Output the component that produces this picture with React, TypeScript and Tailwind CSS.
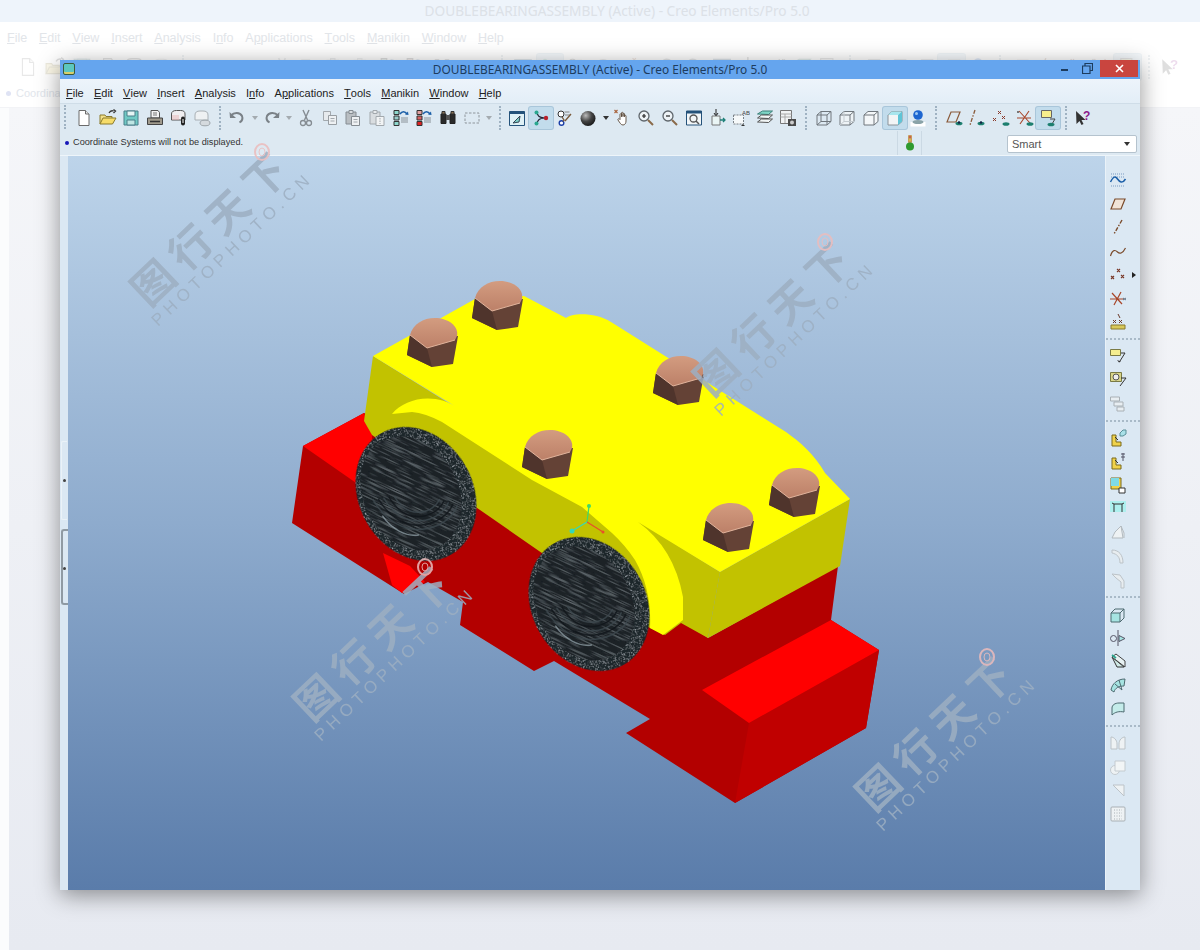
import type { ReactNode } from "react";

const UI = { fontFamily: '"Liberation Sans", Arial, sans-serif' };

const I: Record<string, ReactNode> = {
  doc: (<><path d="M4 1.5h6.5L14 5v11.5H4z" fill="#fff" stroke="#6b6b6b" /><path d="M10.5 1.5V5H14" fill="#e6e6e6" stroke="#6b6b6b" /></>),
  open: (<><path d="M1 15V6h5l1 1.5h6V10" fill="#f2e08a" stroke="#8a7a2c" /><path d="M1 15l3-6h13l-3.5 6z" fill="#f6dc6a" stroke="#8a7a2c" /><path d="M10 4c1-2 3-2.5 4.500-2M14.500 0.500l2 1.500-2 2" fill="none" stroke="#333" strokeWidth="1.300" /></>),
  save: (<><path d="M2 2h14v14H2z" fill="#6fc9c4" stroke="#4a7f8a" /><path d="M5 2h8v5H5z" fill="#e6f5f5" stroke="#4a7f8a" /><path d="M5 11h8v5H5z" fill="#bfe6e4" stroke="#4a7f8a" /></>),
  print: (<><path d="M5 1.500h7l1.500 2V9H5z" fill="#f2f2f2" stroke="#555" /><path d="M1.500 9h15v6.500h-15z" fill="#a09a8c" stroke="#444" /><path d="M4 12.500h10" stroke="#333" strokeWidth="1.500" /><path d="M7 4h4M7 6h4" stroke="#777" /></>),
  preview: (<><path d="M1.500 5c0-2.500 2-3.500 5-3.500h4c3 0 4.500 1 4.500 3.500v6h-13.500z" fill="#f0eef0" stroke="#555" /><path d="M2 6h7v5H2z" fill="#e8b8b8" opacity=".5" /><rect x="11" y="7.500" width="4" height="9" rx="2" fill="#222" /><path d="M13 10v4" stroke="#fff" /></>),
  previewOff: (<><path d="M2 6c0-3 2-4 5-4h3c3 0 5 1 5 4v5H2z" fill="#eef1f3" stroke="#a9b0b5" /><ellipse cx="12" cy="14" rx="5" ry="2.800" fill="#d5dade" stroke="#9ea5aa" /></>),
  undo: (<><path d="M3 6.500c3-3.500 9-3.500 11 .5 1 2.500 0 5-2.500 6.500" fill="none" stroke="#7a8187" strokeWidth="2" /><path d="M1.500 3l.5 6h6z" fill="#7a8187" /></>),
  redo: (<><path d="M15 6.500c-3-3.500-9-3.500-11 .5-1 2.500 0 5 2.500 6.500" fill="none" stroke="#7a8187" strokeWidth="2" /><path d="M16.500 3l-.5 6h-6z" fill="#7a8187" /></>),
  cut: (<><path d="M6 1l4.500 10M12 1L7.500 11" stroke="#858c92" strokeWidth="1.400" /><circle cx="6" cy="14" r="2.500" fill="none" stroke="#858c92" strokeWidth="1.300" /><circle cx="12" cy="14" r="2.500" fill="none" stroke="#858c92" strokeWidth="1.300" /></>),
  copy: (<><path d="M2.500 2.500h7v9h-7z" fill="#e6eaed" stroke="#a2a8ad" /><path d="M7.500 6.500h8v9h-8z" fill="#eef1f3" stroke="#989ea3" /><path d="M9.500 9.500h4M9.500 12h4" stroke="#a2a8ad" /></>),
  paste: (<><path d="M2 3h10v12H2z" fill="#b9bec2" stroke="#858c92" /><path d="M5 1.500h4v3H5z" fill="#d8dcdf" stroke="#858c92" /><path d="M7.500 7.500h8v9h-8z" fill="#eef1f3" stroke="#858c92" /><path d="M9.500 10.500h4M9.500 13h4" stroke="#a2a8ad" /></>),
  pasteS: (<><path d="M2 3h10v12H2z" fill="#d9dde0" stroke="#a2a8ad" /><path d="M5 1.500h4v3H5z" fill="#e8ebed" stroke="#a2a8ad" /><path d="M8 7.500h8v9H8z" fill="#f2f4f5" stroke="#a2a8ad" /><path d="M12 9v6" stroke="#a2a8ad" strokeDasharray="1.500 1" /></>),
  regen1: (<><path d="M2 1.500h5v4H2z" fill="#8dd6cc" stroke="#333" /><path d="M2 7h5v4H2z" fill="#9cc" stroke="#333" /><path d="M2 12.500h5v4H2z" fill="#8dd6cc" stroke="#333" /><path d="M8 5c2-3 5-3 7 0" fill="none" stroke="#1b5fa8" strokeWidth="1.600" /><path d="M13 5.500l3.500.500-.500-3.500z" fill="#1b5fa8" /><path d="M9 9h7M9 11h7M9 13h7" stroke="#8a9298" /></>),
  regen2: (<><path d="M2 1.500h5v4H2z" fill="#e0a0a0" stroke="#333" /><path d="M2 7h5v4H2z" fill="#d86060" stroke="#333" /><path d="M2 12.500h5v4H2z" fill="#d22" stroke="#333" /><path d="M8 5c2-3 5-3 7 0" fill="none" stroke="#1b5fa8" strokeWidth="1.600" /><path d="M13 5.500l3.500.500-.500-3.500z" fill="#1b5fa8" /><path d="M9 9h7M9 11h7M9 13h7" stroke="#8a9298" /></>),
  bino: (<><path d="M2 5h5v9.500H2zM11 5h5v9.500h-5z" fill="#2a2a2a" stroke="#222" /><path d="M7 6h4v5H7z" fill="#555" /><path d="M3 2.500h3V5H3zM12 2.500h3V5h-3z" fill="#8b7355" stroke="#333" /></>),
  dashed: (<path d="M2 4h14v10H2z" fill="none" stroke="#8f969c" strokeDasharray="2.500 1.500" />),
  repaint: (<><path d="M1.500 2.500h15v14h-15z" fill="#dff1f6" stroke="#24527a" /><path d="M1.500 2.500h15V5h-15z" fill="#24527a" /><path d="M5 14l7-7-1 6z" fill="#7fd0c8" stroke="#345" /></>),
  nodes: (<><path d="M5 3.500c1 4 2 5 7.500 5.500M5 14.500c1-4 2-5 7.500-5.500" fill="none" stroke="#223" strokeWidth="1.200" /><circle cx="4.500" cy="3.500" r="2" fill="#2aa78f" /><circle cx="4.500" cy="14.500" r="2" fill="#2aa78f" /><circle cx="14" cy="9" r="2.200" fill="#b8212c" /></>),
  saved: (<><circle cx="5" cy="5" r="3" fill="#fff" stroke="#333" /><circle cx="5.500" cy="14" r="2.300" fill="#fff" stroke="#1b3fa8" strokeWidth="1.400" /><path d="M8.500 3h5M9 6h5" stroke="#888" /><path d="M6 8l2 3-1 1.500M15 5l-6 7" stroke="#7a5a3a" strokeWidth="1.300" fill="none" /></>),
  sphere: (<><defs><radialGradient id="sph" cx=".35" cy=".3" r=".8"><stop offset="0" stopColor="#bbb" /><stop offset=".5" stopColor="#444" /><stop offset="1" stopColor="#111" /></radialGradient></defs><circle cx="9" cy="9.500" r="7.500" fill="url(#sph)" /></>),
  hand: (<><path d="M6 8V5.500c0-1 1.500-1 1.500 0V8m0-1V4c0-1 1.500-1 1.500 0v4m0-1V5c0-1 1.500-1 1.500 0v3m0-1c0-1 1.500-1 1.500 0v5c0 2-1 4-3 4H9c-2 0-3-2-5-5-.5-1 .8-1.800 1.500-1L6 10.500V8" fill="#fff" stroke="#5a4a3a" strokeWidth=".9" /><path d="M0.500 1l3 3M3.500 1l-3 3" stroke="#a8623a" strokeWidth="1.100" /></>),
  zoomIn: (<><circle cx="7" cy="7" r="5" fill="#eef3f6" stroke="#5f666c" strokeWidth="1.300" /><path d="M5 7h4M7 5v4" stroke="#222" strokeWidth="1.200" /><path d="M11 11l5 5" stroke="#8a6a4a" strokeWidth="2" /></>),
  zoomOut: (<><circle cx="7" cy="7" r="5" fill="#eef3f6" stroke="#5f666c" strokeWidth="1.300" /><path d="M5 7h4" stroke="#222" strokeWidth="1.200" /><path d="M11 11l5 5" stroke="#8a6a4a" strokeWidth="2" /></>),
  refit: (<><path d="M1.500 2h15v14h-15z" fill="#f2f6f8" stroke="#24527a" /><path d="M1.500 2h15v2.500h-15z" fill="#24527a" /><circle cx="8.500" cy="9.500" r="3.500" fill="none" stroke="#555" strokeWidth="1.300" /><path d="M11 12l3 3" stroke="#555" strokeWidth="1.500" /></>),
  orient: (<><path d="M8 0v6M6 4l2 3 2-3" stroke="#222" fill="none" /><path d="M4 7h8v9H4z" fill="#eaf5f5" stroke="#777" /><path d="M12 11h5M15 9l2 2-2 2" stroke="#1d7f78" strokeWidth="1.300" fill="none" /></>),
  views: (<><path d="M1.500 6h10v9h-10z" fill="#f6f9fa" stroke="#7a8187" strokeDasharray="2 1" /><text x="10" y="6" fontSize="6" fill="#444" style={UI}>AB</text><path d="M9 17h4l-2-2z" fill="#333" /></>),
  layers: (<><path d="M1.500 5l5-3h10l-4 3.500z" fill="#7fd5c5" stroke="#3a7f78" /><path d="M1.500 9l4-3h11l-4 3.500zM1.500 13l4-3h11l-4 3.500z" fill="#f2f6f6" stroke="#555" /></>),
  mgr: (<><path d="M1.500 1.500h11v13h-11z" fill="#f1f3f4" stroke="#777" /><path d="M1.500 5h11M1.500 8h11M6 5v9" stroke="#a9a9a9" /><path d="M9 10h8v7H9z" fill="#4a4a4a" /><circle cx="13" cy="13.500" r="2" fill="#ccc" /></>),
  wire: (<path d="M2 6l4-3.500h10v10L12 16H2zM2 6h10v10M12 6l4-3.500M2 16l4-3.500h10M6 2.500v10" fill="none" stroke="#70777d" />),
  hidden: (<><path d="M2 6l4-3.500h10v10L12 16H2zM2 6h10v10M12 6l4-3.500" fill="#eef3f6" stroke="#70777d" /><path d="M2 16l4-3.500h10M6 2.500v10" fill="none" stroke="#c4cbd0" /></>),
  noHidden: (<path d="M2 6l4-3.500h10v10L12 16H2zM2 6h10v10M12 6l4-3.500" fill="#f4f7f9" stroke="#70777d" />),
  shaded: (<><path d="M2 6l4-3.500h10v10L12 16H2z" fill="#f2f5f6" stroke="#8b9298" /><path d="M2 6l4-3.500h10L12 6z" fill="#a8e6ee" /><path d="M12 6l4-3.500v10L12 16z" fill="#5fc4d6" /></>),
  ball: (<><path d="M1.500 13h15v4.500h-15z" fill="#fff" /><ellipse cx="9" cy="13" rx="5.500" ry="2" fill="#8aa3a8" /><circle cx="9" cy="6" r="4.800" fill="#1e66d0" /><circle cx="7.500" cy="4.500" r="1.500" fill="#9cc8f5" /></>),
  planes: (<><path d="M2 13L6 3h9l-4 10z" fill="none" stroke="#8a5a3a" strokeWidth="1.200" /><ellipse cx="14" cy="14.500" rx="3.500" ry="1.800" fill="#1d7f6f" /><circle cx="14" cy="13.500" r="1.200" fill="#124" /></>),
  axes: (<><path d="M7 1L2 16" stroke="#8a5a3a" strokeWidth="1.300" strokeDasharray="4 1.500 1.500 1.500" /><ellipse cx="13" cy="14.500" rx="3.500" ry="1.800" fill="#1d7f6f" /><circle cx="13" cy="13.500" r="1.200" fill="#124" /></>),
  points: (<><path d="M6 2l3 3M9 2L6 5M10 7l3 3M13 7l-3 3M1 9l3 3M4 9l-3 3" stroke="#8a3a2a" /><ellipse cx="14" cy="15" rx="3.500" ry="1.800" fill="#1d7f6f" /></>),
  csys: (<><path d="M3 2l11 12M13 2L4 15M1 9h14" stroke="#a8462a" strokeWidth="1.100" /><path d="M1 2l2 2M3 2L1 4" stroke="#777" /><ellipse cx="14" cy="15" rx="3.500" ry="1.800" fill="#1d7f6f" /></>),
  annot: (<><path d="M2.500 1.500h10v7h-10z" fill="#f7ee8c" stroke="#666" /><path d="M11 10h5l-3 5" fill="none" stroke="#444" /><ellipse cx="12" cy="15.500" rx="3.500" ry="1.800" fill="#1d7f6f" /></>),
  help: (<><path d="M2 2l.5 13 3-3 2 4 2-1-2-4h4z" fill="#333" /><text x="9" y="11" fontSize="12" fontWeight="700" fill="#8c1c8c" style={UI}>?</text></>),
  datumCurve: (<><path d="M2 3h14M2 6h14" stroke="#7a9bc2" strokeDasharray="1 1" /><path d="M1.500 11c3-6 5-6 7-3s5 5 8 0" fill="none" stroke="#1b5fa8" strokeWidth="1.500" /><path d="M2 15h14" stroke="#7a9bc2" strokeDasharray="1 1" /></>),
  plane: (<path d="M2 14L6 4h10l-4 10z" fill="#f0e4d8" stroke="#7a4a2a" strokeWidth="1.200" />),
  axis: (<path d="M13 2L5 16" stroke="#7a4a2a" strokeWidth="1.400" strokeDasharray="4 1.500 1.500 1.500" />),
  curve: (<path d="M1.500 14c2-7 5-6 7-4s5 2 8-4" fill="none" stroke="#7a4a2a" strokeWidth="1.200" />),
  pts: (<path d="M8 3l3 3M11 3L8 6M2 10l3 3M5 10l-3 3M12 9l3 3M15 9l-3 3" stroke="#7a3a2a" strokeWidth="1.100" />),
  cs: (<><path d="M3 4l10 11M12 3L5 16M1 10h14" stroke="#a8462a" strokeWidth="1.200" /><path d="M14 9l3 2M17 9l-3 2" stroke="#678" /></>),
  analysisPt: (<><path d="M2 12h14v4H2z" fill="#d9c95a" stroke="#8a7a2c" /><path d="M4 7l3 3M7 7l-3 3M10 7l3 3M13 7l-3 3M9 1l2 4" stroke="#6a3a2a" /></>),
  note: (<><path d="M1.500 2.500h10v6h-10z" fill="#f5ee90" stroke="#7a7a44" /><path d="M12 6h4l-5 8" fill="none" stroke="#333" /><path d="M8 13l2 2.500 2-1z" fill="#333" /></>),
  noteCam: (<><path d="M1.500 1.500h11v9h-11z" fill="#d8d48a" stroke="#7a7a44" /><circle cx="7" cy="6" r="3" fill="#eee" stroke="#555" /><path d="M12 7h5l-6 8" fill="none" stroke="#333" /></>),
  noteOff: (<><path d="M1.500 2h9v4h-9zM5 7h9v4H5zM8 12h7v4H8z" fill="#e8eef2" stroke="#a9b0b5" /></>),
  pull: (<><path d="M3 6v11h9v-4H7V6z" fill="#f0d24a" stroke="#7a6a1c" /><path d="M11 4l3-3h3v4l-3 2h-3z" fill="#a8e0e8" stroke="#5a8f98" /><path d="M9 11l-3-3" stroke="#333" /></>),
  pull2: (<><path d="M3 6v11h9v-4H7V6z" fill="#f0d24a" stroke="#7a6a1c" /><path d="M9 11l-3-3" stroke="#333" /><path d="M14 1v8M12 5h4M12 2h4" stroke="#556" /></>),
  pull3: (<><path d="M2 2h10v11H2z" fill="#f0d24a" stroke="#7a6a1c" /><path d="M2 2h8v8H2z" fill="#7fdbe6" /><path d="M10 12h6v5h-6z" fill="#fff" stroke="#333" /></>),
  rib: (<><path d="M1 1h16v11H1z" fill="#aef0ee" /><path d="M3 3l2 1v8M15 3l-2 1v8M5 4h8" fill="none" stroke="#333" /></>),
  rDraft: (<path d="M3 15h11L12 3 6 9zM12 3l3 7v5" fill="#eef2f4" stroke="#b3babf" />),
  rRound: (<path d="M3 3c7 0 11 5 11 13h-3C11 10 8 7 3 6z" fill="#e8edf0" stroke="#bcc3c8" />),
  rChamfer: (<path d="M3 3l8 1 4 6v7h-3V11L7 7z" fill="#e8edf0" stroke="#bcc3c8" />),
  move: (<><path d="M2 8h9v9H2z" fill="#a6e4e2" stroke="#4d6a70" /><path d="M2 8l4-4h9v9l-4 4" fill="none" stroke="#4d6a70" /><path d="M11 8l4-4" stroke="#4d6a70" /></>),
  mirror: (<><path d="M9 1v16" stroke="#556" /><circle cx="4.500" cy="9.500" r="3" fill="none" stroke="#556" /><path d="M10 6.500l6 3-6 3z" fill="#a6e4e2" stroke="#556" /></>),
  extend: (<><path d="M3 5l12 10H8z" fill="#cfe9e6" stroke="#333" /><path d="M3 5l4-3 9 7v6z" fill="#e8f2f3" stroke="#444" /><path d="M3 3l4 3" stroke="#2aa78f" strokeWidth="1.600" /></>),
  boundary: (<><path d="M2 14c1-6 6-11 14-11l-1 7c-5 0-9 2-10 6z" fill="#a6e4e2" stroke="#4d6a70" /><path d="M6 8l7 6M10 4l3 10" stroke="#4d6a70" /></>),
  loop: (<path d="M3 15V8c0-3 3-5 7-5h5v9c-5-1-9 0-12 3z" fill="#c4ecea" stroke="#4d6a70" />),
  flat: (<><path d="M2 3c3 0 6 3 6 7v5H2zM16 3c-3 0-6 3-6 7v5h6z" fill="#eef2f4" stroke="#bcc3c8" /></>),
  merge: (<><circle cx="6" cy="12" r="4.500" fill="#eef2f4" stroke="#c4cbd0" /><path d="M6 3h10v10H6z" fill="#f2f5f6" stroke="#c4cbd0" /></>),
  corner: (<path d="M4 4h11v11z" fill="#eef2f4" stroke="#bcc3c8" />),
  grid: (<><rect x="2" y="2" width="14" height="14" rx="1" fill="#eef2f4" stroke="#a9b0b5" /><path d="M5 5h8M5 8h8M5 11h8M5 14h8" stroke="#a9b0b5" strokeDasharray="1 1.500" /></>),
};

function Icon({ name, size = 18 }: { name: string; size?: number }) {
  return (
    <svg width={size} height={size} viewBox="0 0 18 18" className="block">
      {I[name]}
    </svg>
  );
}

const Caret = ({ light }: { light?: boolean }) => (
  <svg width="6" height="4" viewBox="0 0 6 4" className="block">
    <path d="M0 0h6L3 4z" fill={light ? "#a4abb0" : "#333"} />
  </svg>
);

const mainBar: string[][] = [
  ["doc", "open", "save", "print", "preview", "previewOff"],
  ["undo", "^", "redo", "^", "cut", "copy", "paste", "pasteS", "regen1", "regen2", "bino", "dashed", "^"],
  ["repaint", "*nodes", "saved", "sphere", "v", "hand", "zoomIn", "zoomOut", "refit", "orient", "views", "layers", "mgr"],
  ["wire", "hidden", "noHidden", "*shaded", "ball"],
  ["planes", "axes", "points", "csys", "*annot"],
  ["help"],
];

const sideBar: string[][] = [
  ["datumCurve", "plane", "axis", "curve", "pts", "cs", "analysisPt"],
  ["note", "noteCam", "noteOff"],
  ["pull", "pull2", "pull3", "rib", "rDraft", "rRound", "rChamfer"],
  ["move", "mirror", "extend", "boundary", "loop"],
  ["flat", "merge", "corner", "grid"],
];

function Toolbar({ ghost }: { ghost?: boolean }) {
  return (
    <div className="flex items-center h-full">
      {mainBar.map((group, g) => (
        <div key={g} className="flex items-center h-full">
          {g > 0 && (
            <div className={`h-[24px] flex justify-center ${ghost ? "w-[16px]" : "w-[11.500px]"}`}>
              <div className="w-[2px] h-full border-l-2 border-dotted border-[#9fb2c2]" />
            </div>
          )}
          {group.map((it, i) => {
            if (it === "^" || it === "v")
              return (
                <div key={i} className={`flex justify-center ${ghost ? "w-[12px]" : "w-[10.500px]"}`}>
                  <Caret light={it === "^"} />
                </div>
              );
            const active = it.startsWith("*");
            return (
              <div
                key={i}
                className={`flex items-center justify-center ${ghost ? "w-[26.700px] h-[26px]" : "w-[23.700px] h-[22px]"} ${
                  active ? "bg-[#c2dcec] rounded-[2px] ring-1 ring-[#a9c6da]" : ""
                }`}
              >
                <Icon name={active ? it.slice(1) : it} size={ghost ? 20 : 18} />
              </div>
            );
          })}
        </div>
      ))}
    </div>
  );
}

const MENU: [string, string, string][] = [
  ["", "F", "ile"],
  ["", "E", "dit"],
  ["", "V", "iew"],
  ["", "I", "nsert"],
  ["", "A", "nalysis"],
  ["I", "n", "fo"],
  ["A", "p", "plications"],
  ["", "T", "ools"],
  ["", "M", "anikin"],
  ["", "W", "indow"],
  ["", "H", "elp"],
];

function Menu({ className }: { className: string }) {
  return (
    <div className={`flex items-center ${className}`} style={UI}>
      {MENU.map(([a, b, c]) => (
        <span key={a + b + c} className="whitespace-nowrap">
          {a}
          <u className="inline-block">{b}</u>
          {c}
        </span>
      ))}
    </div>
  );
}

function Bolt({ x, y }: { x: number; y: number }) {
  return (
    <g transform={`translate(${x} ${y})`}>
      <path d="M3 17L0 37 25 49 46 46 51 18z" fill="#644236" />
      <path d="M3 17L0 37 25 49 20 30z" fill="#4f342c" />
      <path d="M3 17C6 6 16 0 28 0 41 0 52 8 50 18L48 22 20 30z" fill="url(#copper)" />
      <path d="M3 17L20 30 48 22" fill="none" stroke="#e2b49c" strokeWidth="1" />
    </g>
  );
}

function Nut({ x, y }: { x: number; y: number }) {
  return (
    <g transform={`translate(${x} ${y})`}>
      <ellipse rx="57" ry="70" transform="rotate(-30)" fill="#1f2529" filter="url(#grain)" />
      <g clipPath="url(#nutFace)">
        <rect x="-90" y="-90" width="180" height="180" transform="rotate(25)" fill="#1c2226" filter="url(#brush)" />
      </g>
      <g transform="rotate(-30)">
        {[34, 30, 26, 22, 18].map((r, i) => (
          <path
            key={r}
            d={`M${-r - 6 + i} ${-r * 0.5}C${-r - 6 + i} ${r * 1.1} ${r * 0.3} ${r * 1.4} ${r - 4 + i} ${r * 0.9}`}
            fill="none"
            stroke={i % 2 ? "#10151a" : "#3d494f"}
            strokeWidth="1.500"
            opacity=".8"
          />
        ))}
        <path d="M-40 2c1 16 10 30 22 35" fill="none" stroke="#9fb0b8" strokeWidth="1.400" opacity=".65" />
      </g>
    </g>
  );
}

function Watermark({ dx, dy }: { dx: number; dy: number }) {
  return (
    <g transform={`translate(${dx} ${dy})`} fill="#9dafc2" opacity=".85">
      <g transform="translate(158 327) rotate(-43.500)">
        <text x="0" y="0" fontSize="17" textLength="210" style={UI}>
          PHOTOPHOTO.CN
        </text>
        <text
          x="6"
          y="-20"
          fontSize="42"
          fontWeight="700"
          textLength="196"
          style={{ fontFamily: '"Noto Sans CJK SC", sans-serif' }}
        >
          图行天下
        </text>
      </g>
      <ellipse cx="262" cy="152" rx="7" ry="8" fill="none" stroke="#ecbcbc" strokeWidth="2" />
      <ellipse cx="262" cy="152" rx="3" ry="4" fill="none" stroke="#ecbcbc" />
    </g>
  );
}

function Model() {
  return (
    <svg
      viewBox="68 156 1037 733"
      width="1037"
      height="733"
      className="block overflow-visible"
    >
      <defs>
        <linearGradient id="copper" x1="0" y1="0" x2="0" y2="1">
          <stop offset="0" stopColor="#d39c80" />
          <stop offset="1" stopColor="#bc8068" />
        </linearGradient>
        <clipPath id="nutFace">
          <ellipse cx="-4" cy="-3" rx="47" ry="60" transform="rotate(-30)" />
        </clipPath>
        <filter id="grain" x="0" y="0" width="100%" height="100%">
          <feTurbulence type="fractalNoise" baseFrequency="0.9" numOctaves="2" seed="4" />
          <feColorMatrix values="0 0 0 0 .55 0 0 0 0 .62 0 0 0 0 .68 2 0 0 0 -1.100" />
          <feComposite in2="SourceAlpha" operator="in" result="n" />
          <feMerge>
            <feMergeNode in="SourceGraphic" />
            <feMergeNode in="n" />
          </feMerge>
        </filter>
        <filter id="brush" x="0" y="0" width="100%" height="100%">
          <feTurbulence type="fractalNoise" baseFrequency="0.04 0.9" numOctaves="2" seed="9" />
          <feColorMatrix values="0 0 0 0 .35 0 0 0 0 .42 0 0 0 0 .46 1 0 0 0 -.5" />
          <feComposite in2="SourceAlpha" operator="in" result="n" />
          <feMerge>
            <feMergeNode in="SourceGraphic" />
            <feMergeNode in="n" />
          </feMerge>
        </filter>
      </defs>

      {/* red base */}
      <path
        d="M364 413L303 446 292 523 404 594 428 582 463 602 460 625 534 671 554 661 650 719 626 733 735 803 866 728 879 650 831 620 838 566 708 638 400 430z"
        fill="#b30000"
      />
      <path d="M749 723L879 650 866 728 735 803z" fill="#c00000" />
      <path d="M364 413L303 446 372 494 372 435z" fill="#ff0000" />
      <path d="M831 620L879 650 749 723 702 690z" fill="#ff0000" />
      <path d="M383 553L392 585 402 593 425 582 410 566z" fill="#ff0000" />

      {/* yellow block sides */}
      <path d="M373 356L364 421 372 435 650 628 665 635 681 623 708 638 720 572z" fill="#c2c200" />
      <path d="M720 572L850 499 840 566 708 638z" fill="#c2c200" />

      <Nut x={416} y={494} />
      <Nut x={589} y={604} />

      {/* yellow top, running down into the bosses round the nuts */}
      <path
        d="M373 356L475 299 524 296 566 318C572 313 595 312 611 322L786 432C800 442 815 455 825 473L850 499 720 572 638 522Q674 548 683 597L683 620 663 635 650 628Q652 590 635 560 625 545 612 533L582 507 532 480 442 422Q425 413 412 412L392 414C405 398 435 392 458 408z"
        fill="#ffff00"
      />

      <Bolt x={472} y={281} />
      <Bolt x={407} y={318} />
      <Bolt x={653} y={356} />
      <Bolt x={522} y={430} />
      <Bolt x={703} y={503} />
      <Bolt x={769} y={468} />

      {/* triad */}
      <path d="M587 522L589 506" stroke="#3fd86a" strokeWidth="1.200" />
      <circle cx="589" cy="506" r="2" fill="#3fd86a" />
      <path d="M587 522L572 531" stroke="#35d8b8" strokeWidth="1.200" />
      <circle cx="572" cy="531" r="2.500" fill="#35d8b8" />
      <path d="M587 522L603 532" stroke="#e8502a" strokeWidth="1.200" />
      <circle cx="603" cy="532" r="1.500" fill="#e8502a" />

      <Watermark dx={0} dy={0} />
      <Watermark dx={563} dy={90} />
      <Watermark dx={163} dy={415} />
      <Watermark dx={725} dy={505} />
    </svg>
  );
}

export default function App() {
  return (
    <div className="relative w-[1200px] h-[950px] overflow-hidden flex flex-col bg-white" style={UI}>
      {/* window behind, washed out */}
      <div className="relative h-[22px] bg-[#eef4fb] flex items-center justify-center text-[13.700px] text-[#dce1e7]" style={{ fontFamily: '"Noto Sans", sans-serif' }}>
        <span className="pl-[34px]">DOUBLEBEARINGASSEMBLY (Active) - Creo Elements/Pro 5.0</span>
      </div>
      <Menu className="h-[32px] pl-[7px] gap-[11.800px] text-[12.500px] text-[#e2e5e9]" />
      <div className="h-[26px] pl-[15px] opacity-15">
        <Toolbar ghost />
      </div>
      <div className="h-[28px] pl-[6px] flex items-center gap-[5px] text-[11px] text-[#e2e6ec] border-b border-[#f2f3f6]">
        <span className="w-[5px] h-[5px] rounded-full bg-[#dfe3f4]" />
        Coordinate Systems will not be displayed.
      </div>
      <div className="flex-1 flex">
        <div className="w-[9px] bg-[#fbfcfd]" />
        <div className="flex-1 bg-linear-to-b from-[#f5f6f9] to-[#e7eaf1]" />
      </div>

      {/* active window */}
      <div className="absolute left-[60px] top-[60px] w-[1080px] h-[830px] flex flex-col bg-[#dbe8f3] shadow-[0_5px_22px_rgba(0,0,0,0.42)]">
        <div className="relative h-[19px] bg-[#65a5ee] flex items-center justify-center shrink-0">
          <div className="absolute left-[3px] top-[3px] w-[12px] h-[12px] rounded-[2px] bg-[#5cc7bf] border border-[#3d5a3a] shadow-[inset_0_-2px_0_#d9cf6a]" />
          <span className="text-[11.900px] text-[#1d3c5e]" style={{ fontFamily: '"Noto Sans", sans-serif' }}>
            DOUBLEBEARINGASSEMBLY (Active) - Creo Elements/Pro 5.0
          </span>
          <div className="absolute right-0 top-0 h-[17px] flex items-center">
            <span className="w-[7px] h-[2px] bg-[#1d3c5e] mt-[3px]" />
            <svg width="11" height="11" viewBox="0 0 11 11" className="ml-[14px] mr-[7px]">
              <path d="M3 3V.500h7.500v7H8" fill="none" stroke="#1d3c5e" strokeWidth="1.200" />
              <path d="M.500 3h7.500v7.500H.500z" fill="#65a5ee" stroke="#1d3c5e" strokeWidth="1.200" />
            </svg>
            <div className="w-[38px] h-[17px] mr-[2px] bg-[#c9453f] flex items-center justify-center">
              <svg width="9" height="9" viewBox="0 0 9 9">
                <path d="M1 1l7 7M8 1L1 8" stroke="#fff" strokeWidth="1.600" />
              </svg>
            </div>
          </div>
        </div>

        <Menu className="h-[25px] pl-[6px] gap-[10.200px] text-[11px] text-[#222] pt-[4px] bg-linear-to-b from-[#edf4fb] to-[#e3eef7] border-b border-[#cfdde8] shrink-0" />

        <div className="relative h-[27px] pl-[12px] bg-[#dde9f2] shrink-0">
          <div className="absolute left-[4px] top-[1px] h-[24px] border-l-2 border-dotted border-[#9fb2c2]" />
          <Toolbar />
        </div>

        <div className="relative h-[25px] bg-[#dde9f2] border-b border-[#eef5fa] flex items-center pl-[5px] gap-[4px] text-[9.200px] text-[#333] shrink-0">
          <span className="w-[4px] h-[4px] rounded-full bg-[#1616b8]" />
          Coordinate Systems will not be displayed.
          <div className="absolute left-[837px] top-0 h-full w-[25px] border-x border-[#cbd9e4] flex items-center justify-center">
            <svg width="8" height="16" viewBox="0 0 8 16">
              <rect x="2" y="0" width="4" height="8" rx="1" fill="#c79a5a" />
              <circle cx="4" cy="2" r="1" fill="#c9504a" />
              <circle cx="4" cy="5" r="1" fill="#d8c24a" />
              <circle cx="4" cy="11.500" r="4" fill="#2f9a2f" />
            </svg>
          </div>
          <div className="absolute right-[3px] top-[4px] w-[130px] h-[18px] bg-white rounded-[2px] border border-[#b5c3ce] flex items-center justify-between pl-[4px] pr-[6px] text-[11px] text-[#555]">
            Smart
            <Caret />
          </div>
        </div>

        <div className="flex-1 flex min-h-0">
          <div className="relative w-[8px] bg-[#dbe8f3] shrink-0">
            <div className="absolute left-[1px] top-[285px] w-[6px] h-[79px] border border-r-0 border-[#eaf2f8] rounded-l-[2px]" />
            <div className="absolute left-[1px] top-[373px] w-[7px] h-[76px] border-2 border-r-0 border-[#8f9aa3] rounded-l-[3px]" />
            <span className="absolute left-[3px] top-[323px] w-[3px] h-[3px] rounded-full bg-[#444]" />
            <span className="absolute left-[3px] top-[411px] w-[3px] h-[3px] rounded-full bg-[#444]" />
          </div>
          <div className="relative w-[1037px] bg-linear-to-b from-[#bdd4ea] via-[#8eabcd] to-[#5a7caa]">
            <Model />
          </div>
          <div className="flex-1 flex flex-col items-stretch bg-[#dbe8f3] border-l border-[#eaf2f8] pt-[12px]">
            {sideBar.map((group, g) => (
              <div key={g} className="flex flex-col">
                {g > 0 && (
                  <div className="h-[10.500px] flex items-center">
                    <div className="w-full border-t-2 border-dotted border-[#a9bac8]" />
                  </div>
                )}
                {group.map((n) => (
                  <div key={n} className="relative h-[23.700px] flex items-center pl-[3px]">
                    <Icon name={n} />
                    {n === "pts" && (
                      <svg width="4" height="6" viewBox="0 0 4 6" className="absolute left-[26px]">
                        <path d="M0 0l4 3-4 3z" fill="#222" />
                      </svg>
                    )}
                  </div>
                ))}
              </div>
            ))}
          </div>
        </div>
      </div>
    </div>
  );
}
